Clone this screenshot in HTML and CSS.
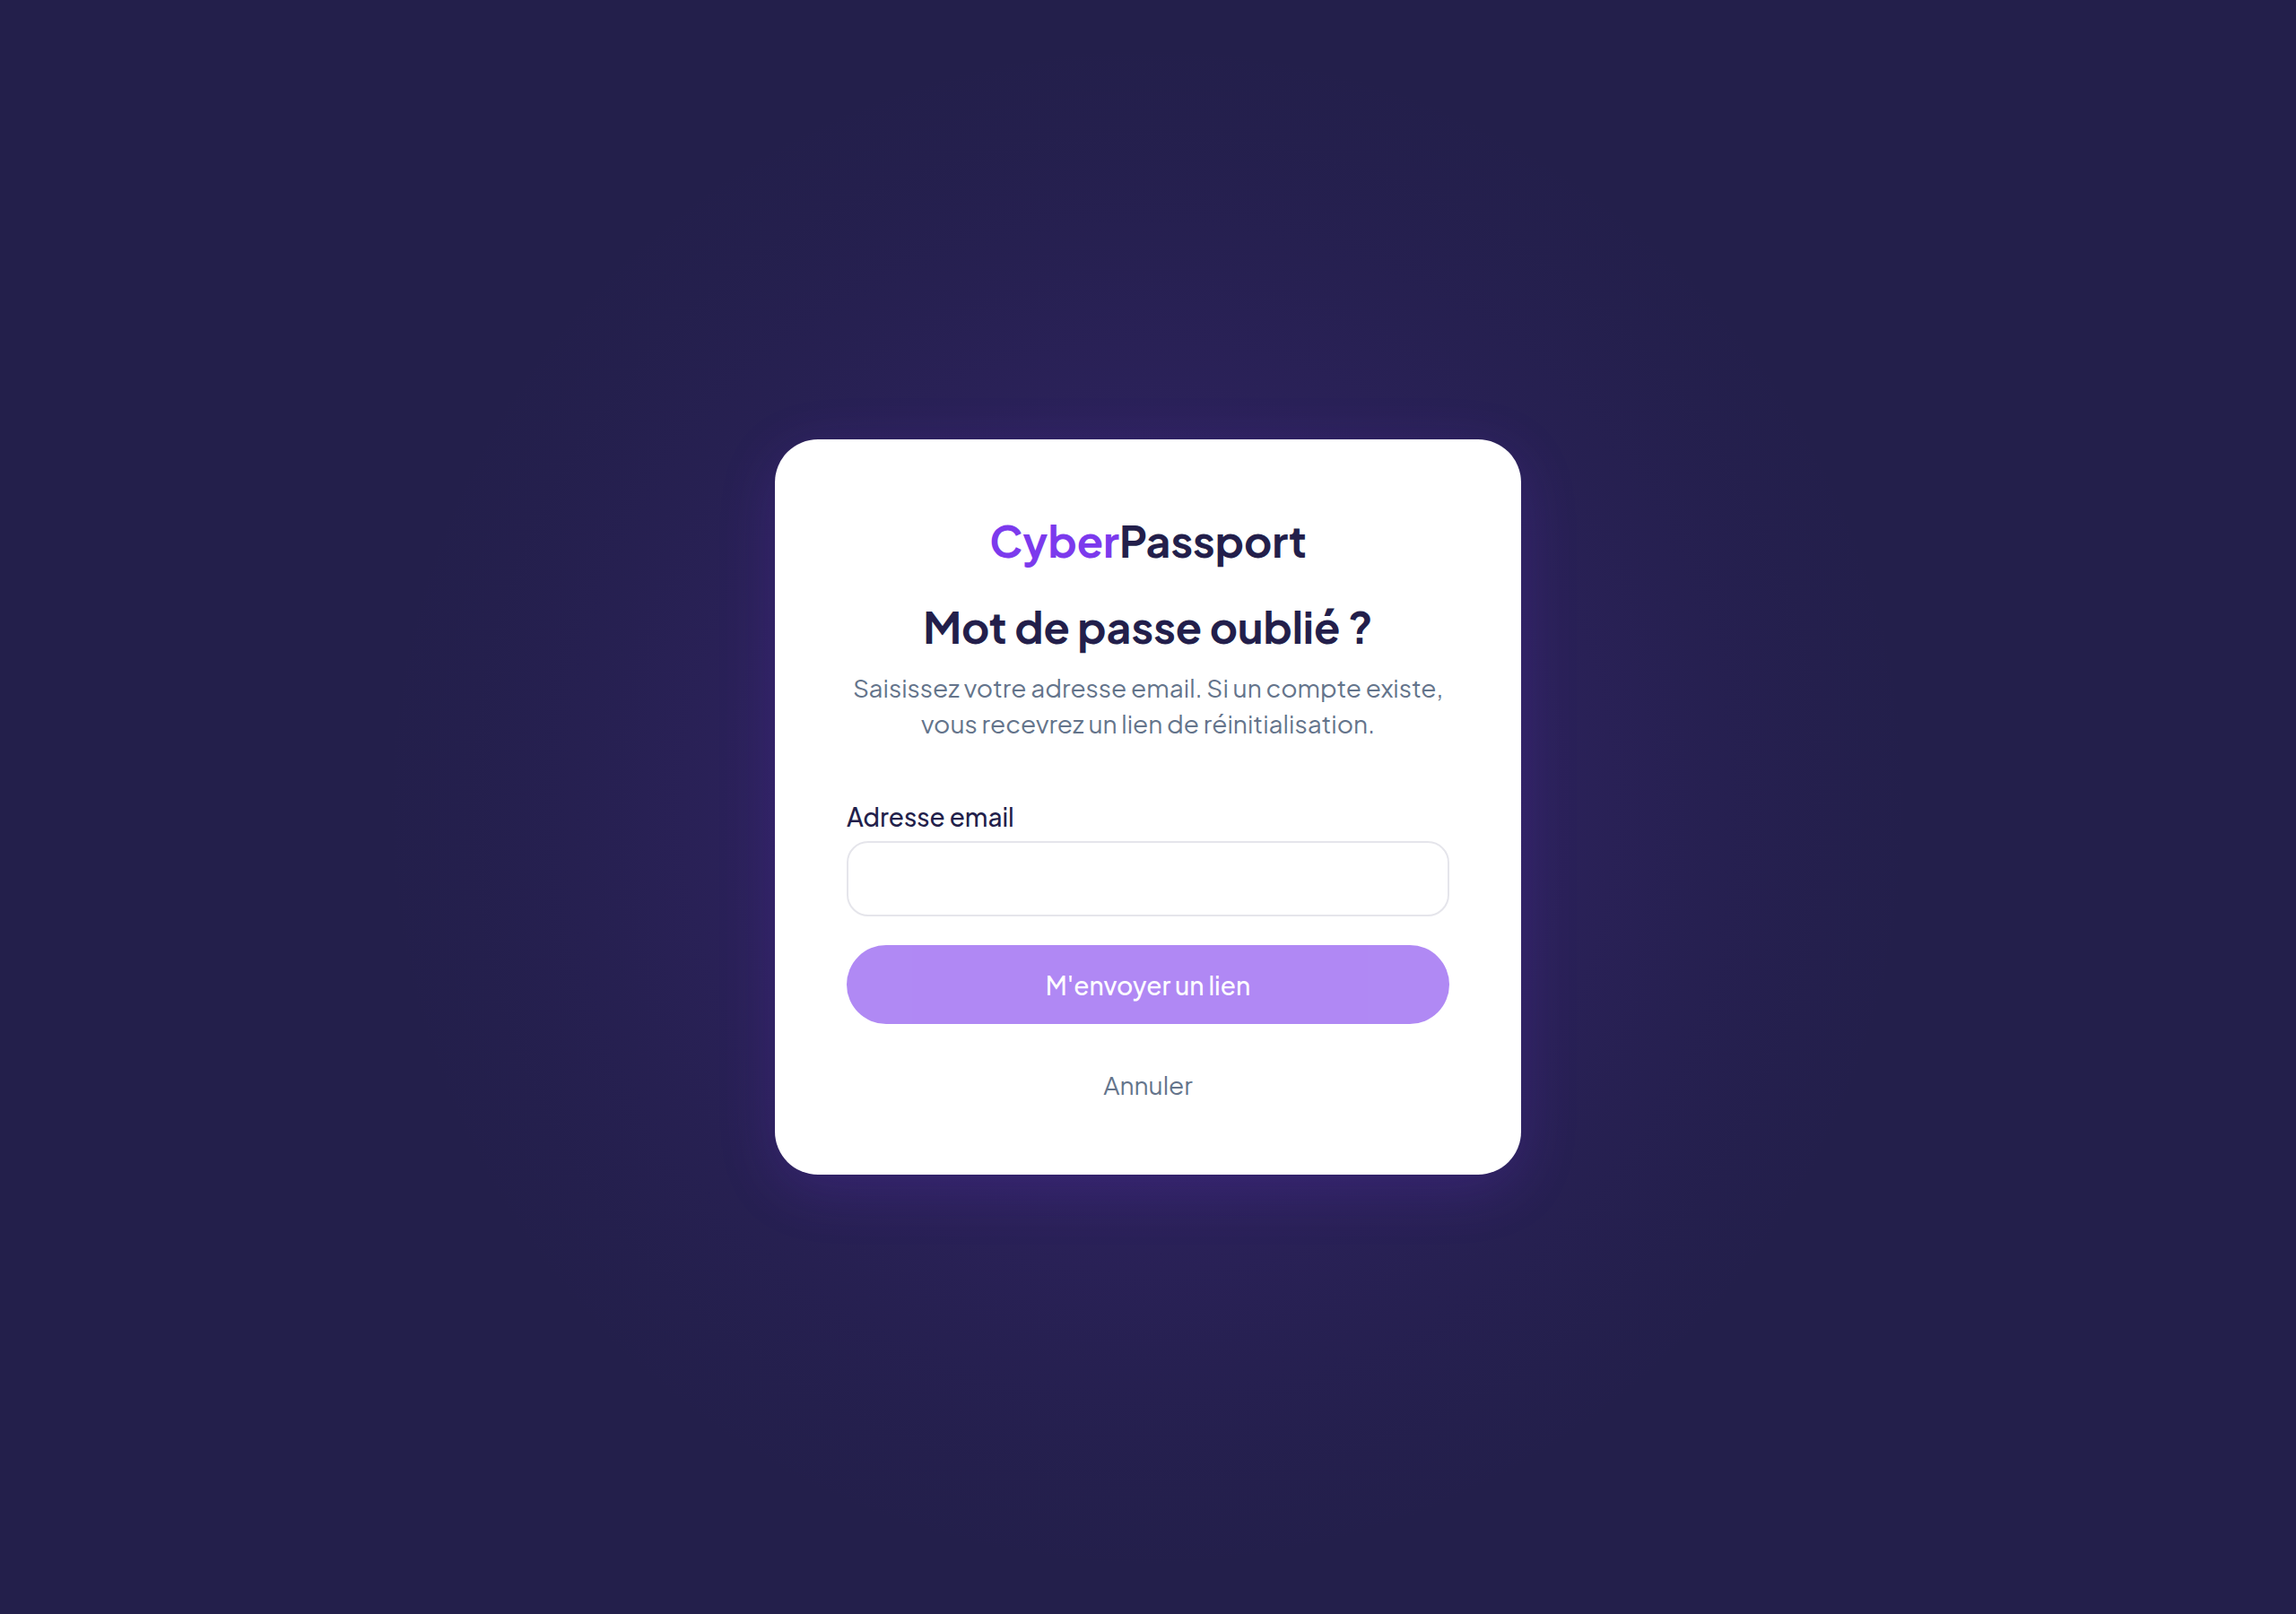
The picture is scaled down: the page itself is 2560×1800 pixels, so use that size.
FILE: index.html
```html
<!DOCTYPE html>
<html lang="fr">
<head>
  <meta charset="UTF-8" />
  <meta name="viewport" content="width=device-width, initial-scale=1" />
  <title>CyberPassport - Mot de passe oublié</title>
  <link rel="stylesheet" href="styles.css">
</head>
<body>

<main class="page">
  <div class="card">
    <div class="logo"><span class="logo-accent">Cyber</span>Passport</div>
    <h1 class="title">Mot de passe oublié ?</h1>
    <p class="intro">Saisissez votre adresse email. Si un compte existe, vous recevrez un lien de réinitialisation.</p>

    <form class="form">
      <label class="label" for="email">Adresse email</label>
      <input class="field" type="email" id="email" name="email" required>
      <button class="submit" type="submit" disabled>M'envoyer un lien</button>
    </form>

    <a class="cancel" href="#">Annuler</a>
  </div>
</main>

</body>
</html>
```

FILE: styles.css
```css
* { box-sizing: border-box; }

body {
  margin: 0;
  font-family: "Plus Jakarta Sans", Inter, "Liberation Sans", sans-serif;
  font-size: 28px;
  line-height: 40px;
  color: #231f4b;
  background: #231f4b;
}

/* halo violet derriere la carte */
.page {
  min-height: 100vh;
  display: flex;
  align-items: center;
  justify-content: center;
  background: radial-gradient(circle at center,
    rgba(124, 58, 237, 0.11) 380px,
    rgba(124, 58, 237, 0.08) 480px,
    rgba(124, 58, 237, 0.04) 620px,
    rgba(124, 58, 237, 0.015) 740px,
    rgba(124, 58, 237, 0) 860px);
}

.card {
  width: 100%;
  max-width: 832px;
  padding: 80px;
  display: flex;
  flex-direction: column;
  text-align: center;
  background: #fff;
  border-radius: 48px;
  box-shadow: 0 16px 64px rgba(124, 58, 237, 0.18);
}

.logo { font-size: 48px; font-weight: 700; line-height: 66px; }
.logo-accent { color: #7c3aed; }
.title { margin: 30px 0 15px; font-size: 48px; font-weight: 700; line-height: 66px; }
.intro { margin: 0; color: #64748b; }

.form { margin-top: 64px; display: flex; flex-direction: column; }
.label { margin-bottom: 7px; font-weight: 500; text-align: left; }
.field {
  height: 84px;
  padding: 0 24px;
  font: inherit;
  color: inherit;
  background: #fff;
  border: 2px solid #e5e5eb;
  border-radius: 24px;
}
.submit {
  height: 88px;
  margin-top: 32px;
  padding: 2px 24px 0;
  font: inherit;
  font-weight: 500;
  color: #fff;
  background: #7c3aed;
  border: none;
  border-radius: 44px;
}
.submit:disabled { opacity: 0.6; }

.cancel { margin-top: 48px; color: #64748b; text-decoration: none; }
```
